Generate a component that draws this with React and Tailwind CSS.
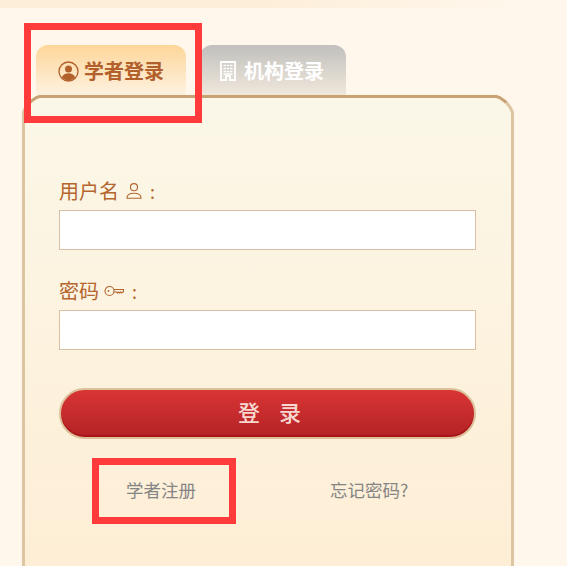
const UserCircleIcon = () => (
  <svg width="21" height="21" viewBox="0 0 21 21" className="-mt-[0.5px] shrink-0">
    <circle cx="10.500" cy="10.500" r="9.500" fill="none" stroke="#b2602c" strokeWidth="1.300" />
    <circle cx="10.500" cy="8" r="3.500" fill="#b2602c" />
    <path d="M3.800 16.200c1.200-2.900 3.700-4 6.700-4s5.500 1.100 6.700 4c-1.600 1.900-4 3.200-6.700 3.200s-5.100-1.300-6.700-3.200z" fill="#b2602c" />
  </svg>
);

const BuildingIcon = () => (
  <svg width="16" height="20" viewBox="0 0 16 20" className="shrink-0">
    <path d="M1 1h14v18h-5v-4H6v4H1z" fill="none" stroke="#fff" strokeWidth="1.800" />
    <path
      d="M3.500 4.500h2.500M6.800 4.500h2.500M10 4.500h2.500M3.500 7.500h2.500M6.800 7.500h2.500M10 7.500h2.500M3.500 10.500h2.500M6.800 10.500h2.500M10 10.500h2.500M3.500 13h9"
      stroke="#fff"
      strokeWidth="1.600"
    />
  </svg>
);

const PersonIcon = () => (
  <svg width="16" height="16" viewBox="1 1 14 14.500" fill="none" stroke="#b5652e" strokeWidth="1">
    <circle cx="8" cy="4.800" r="3.200" />
    <path d="M1.600 14.800c0-3 2.700-4.500 6.400-4.500s6.400 1.500 6.400 4.500z" />
  </svg>
);

const KeyIcon = () => (
  <svg width="20" height="12" viewBox="0 0 20 12" fill="none" stroke="#b5652e" strokeWidth="1.100">
    <circle cx="5.500" cy="6" r="4.500" />
    <circle cx="4.500" cy="6" r="0.900" fill="#b5652e" stroke="none" />
    <path d="M10 4.500h9.500v2.500h-1l-1 1-1-1-1 1-1-1-1 1-1-1h-2.500" />
  </svg>
);

const Field = ({ label, icon, className, iconClass }) => (
  <div className={className}>
    <div className="flex h-[28px] items-center pb-[3px] text-[20px] leading-none text-[#b5652e]">
      <span>{label}</span>
      <span className={iconClass}>{icon}</span>
      <span className="ml-[8px] text-[18px]">:</span>
    </div>
    <input
      type="text"
      className="mt-[4px] block h-[40px] w-full border border-[#d8bfa6] bg-white outline-none"
    />
  </div>
);

export default function App() {
  return (
    <div className="relative flex h-[566px] w-[567px] flex-col overflow-hidden bg-[#fff7ec] font-['Noto_Sans_CJK_SC','Liberation_Sans',sans-serif]">
      <div className="h-[8px] w-[520px] shrink-0 bg-gradient-to-r from-[#fdeed9] via-[#fdeed9] to-[#fff7ec]" />

      {/* tabs */}
      <div className="mt-[37px] flex h-[52px] shrink-0 gap-[14px] pl-[36px]">
        <div className="flex w-[150px] items-start justify-center gap-[5px] rounded-t-[12px] bg-gradient-to-b from-[#fed699] to-[#fdf3e3] pt-[16px]">
          <UserCircleIcon />
          <span className="text-[20px] leading-[20px] font-bold text-[#b2602c]">学者登录</span>
        </div>
        <div className="flex w-[146px] items-start justify-center gap-[8px] rounded-t-[12px] bg-gradient-to-b from-[#c1c0be] to-[#f2e9dc] pt-[16px] pr-[2px]">
          <BuildingIcon />
          <span className="text-[20px] leading-[20px] font-bold text-white">机构登录</span>
        </div>
      </div>

      {/* panel */}
      <div className="relative z-10 -mt-[2px] ml-[22px] w-[492px] flex-1 rounded-t-[18px] border-x-[3px] border-t-[3px] border-x-[#dcc5a0] border-t-[#c9a273] bg-gradient-to-b from-[#fbf7e8] to-[#feeed6] pt-[80px] pr-[35px] pl-[34px] [corner-shape:superellipse(0.6)]">
        <Field label="用户名" icon={<PersonIcon />} iconClass="ml-[7px] flex items-center" />
        <Field label="密码" icon={<KeyIcon />} iconClass="ml-[5px] flex items-center" className="mt-[28px]" />

        <button className="mt-[38px] flex h-[51px] w-full items-center justify-center gap-[19px] rounded-full border-2 border-[#dcc09a] bg-gradient-to-b from-[#d93535] to-[#b42226] pb-[5px] pl-[4px] text-[22px] font-medium text-[#f7d8d0] shadow-[inset_0_-2px_0_#a81418]">
          <span>登</span>
          <span>录</span>
        </button>

        <div className="mt-[38px] flex text-[17.500px] leading-[26px] text-[#858585]">
          <span className="ml-[67px]">学者注册</span>
          <span className="ml-[134px]">忘记密码?</span>
        </div>
      </div>

      {/* annotation boxes */}
      <div className="absolute top-[23px] left-[24px] z-20 h-[100px] w-[178px] border-[7px] border-[#ff3b3b]" />
      <div className="absolute top-[458px] left-[92px] z-20 h-[66px] w-[144px] border-[7px] border-[#ff3b3b]" />
    </div>
  );
}
